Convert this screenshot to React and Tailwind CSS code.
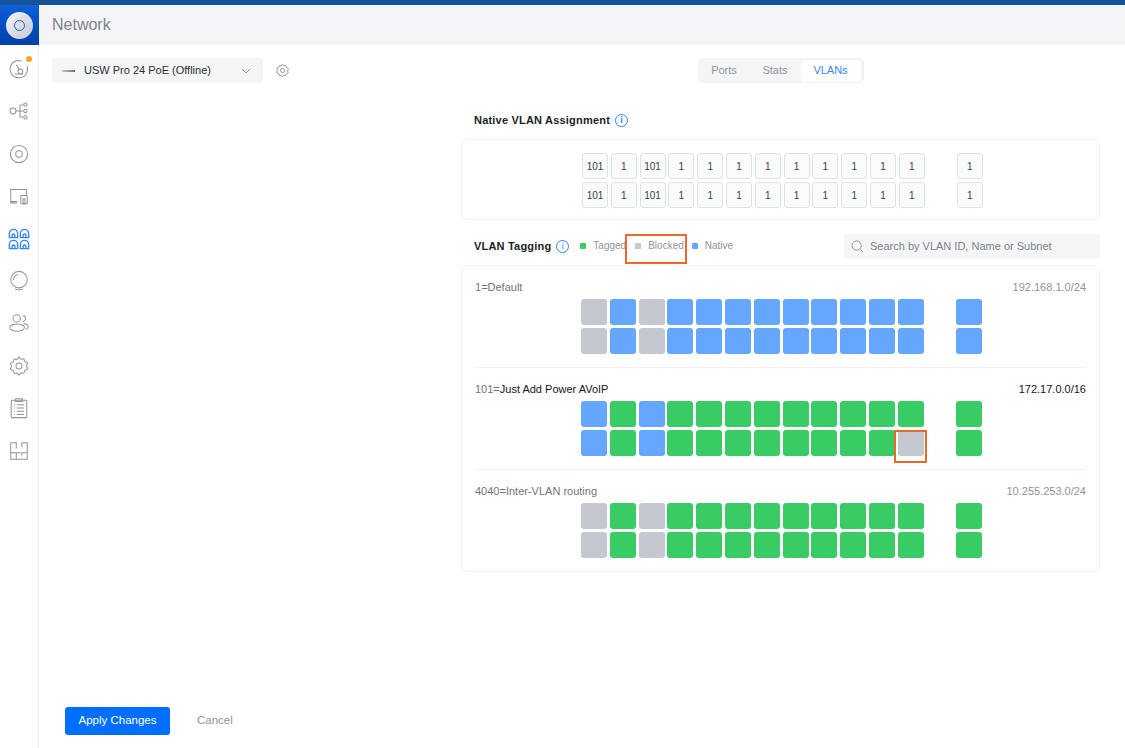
import React from "react";

const FONT = { fontFamily: '"Liberation Sans", Arial, sans-serif' };
const GREEN = "bg-[#39cb64]";
const BLUE = "bg-[#65a6ff]";
const GRAY = "bg-[#c5c8d1]";

function Ico({ children, className = "" }) {
  return (
    <svg viewBox="0 0 24 24" width="22" height="22" fill="none" stroke="#8f949c" strokeWidth="1.1" className={className}>
      {children}
    </svg>
  );
}

function Sidebar() {
  return (
    <aside className="w-[39px] shrink-0 border-r border-[#eeeff1] flex flex-col items-center bg-white">
      <div className="w-[39px] h-[40px] bg-gradient-to-b from-[#0c60d6] to-[#003fa8] flex items-center justify-center">
        <div className="w-[27px] h-[27px] rounded-full bg-gradient-to-br from-[#f4f5f8] to-[#c4c8d6] flex items-center justify-center">
          <div className="w-[11px] h-[11px] rounded-full border-[1.5px] border-[#2a5db0]"></div>
        </div>
      </div>
      <div className="flex flex-col items-center mt-[13px] gap-[20.4px]">
        <div className="relative w-[22px] h-[22px]">
          <Ico>
            <path d="M15 3.2A9.5 9.5 0 1 0 20.8 9" />
            <path d="M9 7.5l3.3 5" />
            <circle cx="13.5" cy="14.5" r="2.6" />
            <path d="M7.5 17.5h9" />
          </Ico>
          <span className="absolute right-[-2px] top-[-2px] w-[6px] h-[6px] rounded-full bg-[#f5a623]"></span>
        </div>
        <Ico>
          <circle cx="5.5" cy="12" r="3.2" />
          <path d="M8.7 12H13M13 5.5v13M13 5.5h4M13 18.5h4M13 12h4" />
          <circle cx="19" cy="5" r="1.8" />
          <circle cx="19" cy="12" r="1.8" />
          <circle cx="19" cy="19" r="1.8" />
        </Ico>
        <Ico>
          <circle cx="12" cy="12" r="9.4" />
          <circle cx="12" cy="12" r="3.6" />
        </Ico>
        <Ico>
          <path d="M10 18H3V5h17v6" />
          <path d="M3 18v1.5h7" />
          <rect x="14" y="11.5" width="7" height="9" rx="1" />
          <rect x="16.5" y="15" width="2" height="5.5" />
        </Ico>
        <svg viewBox="0 0 24 24" width="22" height="22" fill="none" stroke="#2f86ff" strokeWidth="1.5">
          <path d="M1.5 10.5V6a4.5 4.5 0 0 1 9 0v4.5z" />
          <path d="M13.5 10.5V6a4.5 4.5 0 0 1 9 0v4.5z" />
          <path d="M1.5 22.5V18a4.5 4.5 0 0 1 9 0v4.500z" />
          <path d="M13.500 22.500V18a4.500 4.500 0 0 1 9 0v4.500z" />
          <path d="M4.500 10V8a1.500 1.500 0 0 1 3 0v2M16.500 10V8a1.500 1.500 0 0 1 3 0v2M4.500 22v-2a1.500 1.500 0 0 1 3 0v2M16.500 22v-2a1.500 1.500 0 0 1 3 0v2" />
        </svg>
        <Ico>
          <circle cx="12" cy="10.500" r="9" />
          <path d="M6 11a6 6 0 0 1 5-6" />
          <path d="M8 20.500c0 1.500 8 1.500 8 0" />
        </Ico>
        <Ico>
          <circle cx="9.500" cy="7" r="4" />
          <path d="M16 4a3 3 0 0 1 0 6.500" />
          <ellipse cx="10" cy="17" rx="8" ry="4" />
          <path d="M17 12.500c3 .5 5 2 5 3.500s-1 2-2.500 2.500" />
        </Ico>
        <Ico>
          <path d="M12 2l2 2.600 3.300-.5 1 3.200 3 1.400-1 3.300 1 3.300-3 1.400-1 3.200-3.300-.5L12 22l-2-2.400-3.300.5-1-3.200-3-1.400 1-3.300-1-3.300 3-1.400 1-3.200 3.300.5z" />
          <circle cx="12" cy="12" r="3.300" />
        </Ico>
        <Ico>
          <rect x="3.500" y="3.500" width="17" height="19" rx="1" />
          <rect x="8" y="1.800" width="8" height="3.200" rx="0.500" />
          <path d="M6.500 8.500h1M9.500 8.500h8M6.500 12h1M9.500 12h8M6.500 15.500h1M9.500 15.500h8M6.500 19h1M9.500 19h8" />
        </Ico>
        <Ico>
          <path d="M3 3h6v6M15 3h6v18H3V3M15 3v5M3 14h6M9 14v7M9 14h5M15 14h6M15 14v3" />
        </Ico>
      </div>
    </aside>
  );
}

function Port({ bg, children }) {
  return (
    <div className={`w-[26px] h-[26px] rounded-[3px] flex items-center justify-center text-[10px] text-[#3c4148] ${bg}`}>
      {children}
    </div>
  );
}

function PortGrid({ rows, mk }) {
  return (
    <div className="flex flex-col gap-[3px] pl-[120px]">
      {rows.map((row, i) => (
        <div key={i} className="flex">
          <div className="flex gap-[2.8px]">
            {row.slice(0, 12).map((c, j) => (
              <React.Fragment key={j}>{mk(c)}</React.Fragment>
            ))}
          </div>
          <div className="ml-[32px]">{mk(row[12])}</div>
        </div>
      ))}
    </div>
  );
}

const nativeRow = ["101", "1", "101", "1", "1", "1", "1", "1", "1", "1", "1", "1", "1"];
const mkNative = (c) => (
  <div className="w-[26px] h-[26px] rounded-[3px] border border-[#dfe1e5] bg-[#fafbfb] flex items-center justify-center text-[10px] text-[#3c4148]">
    {c}
  </div>
);
const mkColor = (c) => <Port bg={c === "g" ? GREEN : c === "b" ? BLUE : GRAY} />;

const row = (s) => s.split("");

function VlanRow({ label, sub, rows, dark, last }) {
  return (
    <div className={`mx-[13px] ${last ? "" : "border-b border-[#f0f1f3]"}`}>
      <div className="flex justify-between items-center h-[22px] mt-[10px] text-[11px] text-[#6f747c]">
        <span>
          <span>{label[0]}=</span>
          <span className={dark ? "text-[#14161a]" : ""}>{label[1]}</span>
        </span>
        <span className={dark ? "text-[#14161a]" : "text-[#8f949c]"}>{sub}</span>
      </div>
      <div className={`mt-[1px] ${last ? "mb-[13px]" : "mb-[13px]"} -ml-[14px]`}>
        <PortGrid rows={rows} mk={mkColor} />
      </div>
    </div>
  );
}

function Info() {
  return (
    <span className="w-[13px] h-[13px] rounded-full border border-[#2f86ff] text-[#2f86ff] text-[9px] leading-none flex items-center justify-center ml-[5px]">
      i
    </span>
  );
}

function Legend({ color, children }) {
  return (
    <span className="flex items-center text-[10px] text-[#8f949c]">
      <span className={`w-[6px] h-[6px] rounded-[1px] mr-[7px] ${color}`}></span>
      <span className="-mt-[2px]">{children}</span>
    </span>
  );
}

export default function App() {
  return (
    <div className="w-[1125px] h-[748px] overflow-hidden bg-white flex flex-col relative" style={FONT}>
      <div className="h-[5px] bg-[#15549b] shrink-0"></div>
      <div className="flex flex-1 min-h-0">
        <Sidebar />
        <main className="flex-1 min-w-0 flex flex-col">
          <header className="h-[40px] shrink-0 bg-[#f4f5f6] pl-[13px] flex items-center text-[16px] text-[#7e838b]">
            Network
          </header>
          <div className="flex flex-1 min-h-0">
            <div className="w-[422px] shrink-0 flex flex-col justify-between pl-[13px]">
              <div className="flex items-center mt-[13px]">
                <div className="w-[211px] h-[25px] rounded-[4px] bg-[#f4f5f6] flex items-center pl-[10px] pr-[12px]">
                  <span className="w-[13px] h-[2px] bg-gradient-to-r from-[#c8cacd] to-[#6b6e72]"></span>
                  <span className="ml-[9px] text-[11px] text-[#2b2f36] flex-1">USW Pro 24 PoE (Offline)</span>
                  <svg width="10" height="6" viewBox="0 0 10 6" fill="none" stroke="#9a9ea6" strokeWidth="1">
                    <path d="M1 1l4 4 4-4" />
                  </svg>
                </div>
                <svg viewBox="0 0 24 24" width="15" height="15" fill="none" stroke="#8f949c" strokeWidth="1.500" className="ml-[12px]">
                  <path d="M12 2l2 2.600 3.300-.5 1 3.200 3 1.400-1 3.300 1 3.300-3 1.400-1 3.200-3.300-.5L12 22l-2-2.400-3.300.5-1-3.200-3-1.400 1-3.300-1-3.300 3-1.400 1-3.200 3.300.5z" />
                  <circle cx="12" cy="12" r="3.300" />
                </svg>
              </div>
              <div className="flex items-center mb-[13px] ml-[13px]">
                <button className="w-[105px] h-[28px] rounded-[3px] bg-[#006fff] text-white text-[11.500px]">Apply Changes</button>
                <button className="ml-[27px] text-[11.500px] text-[#8f949c]">Cancel</button>
              </div>
            </div>

            <div className="w-[639px] shrink-0">
              <div className="flex justify-center mt-[13px] pl-[178px] pr-[0px]">
                <div className="w-[166px] h-[25px] rounded-[5px] bg-[#f4f5f6] border border-[#f0f1f3] flex items-center text-[11px] text-[#8f949c] mr-[178px]">
                  <span className="w-[51px] text-center">Ports</span>
                  <span className="w-[51px] text-center">Stats</span>
                  <span className="w-[60px] h-[22px] rounded-[4px] bg-white text-[#2f86ff] flex items-center justify-center">VLANs</span>
                </div>
              </div>

              <div className="flex items-center mt-[29px] ml-[13px] h-[16px] text-[11px] font-bold text-[#1c1f24] tracking-[0.2px]">
                Native VLAN Assignment
                <Info />
              </div>
              <div className="mt-[11px] h-[81px] rounded-[6px] border border-[#f0f1f3] pt-[13px] -mb-[0px]">
                <PortGrid rows={[nativeRow, nativeRow]} mk={mkNative} />
              </div>

              <div className="flex items-center mt-[13px] h-[26px]">
                <span className="ml-[13px] text-[11px] font-bold text-[#1c1f24] tracking-[0.2px]">VLAN Tagging</span>
                <Info />
                <div className="flex ml-[11px] gap-[9px]">
                  <Legend color={GREEN}>Tagged</Legend>
                  <Legend color={GRAY}>Blocked</Legend>
                  <span className="ml-[-1px]">
                    <Legend color={BLUE}>Native</Legend>
                  </span>
                </div>
                <div className="ml-auto w-[256px] h-[25px] rounded-[4px] bg-[#f4f5f6] flex items-center pl-[7px] text-[11px] text-[#7e838b]">
                  <svg viewBox="0 0 14 14" width="13" height="13" fill="none" stroke="#8f949c" strokeWidth="1">
                    <circle cx="6" cy="6" r="5" />
                    <path d="M10 10l3 3" />
                  </svg>
                  <span className="ml-[6px]">Search by VLAN ID, Name or Subnet</span>
                </div>
              </div>

              <div className="mt-[6px] h-[307px] rounded-[6px] border border-[#f0f1f3]">
                <VlanRow
                  label={["1", "Default"]}
                  sub="192.168.1.0/24"
                  rows={[row("ababbbbbbbbbb"), row("ababbbbbbbbbb")].map((r) => r.map((c) => (c === "a" ? "x" : "b")))}
                />
                <VlanRow
                  label={["101", "Just Add Power AVoIP"]}
                  sub="172.17.0.0/16"
                  dark
                  rows={[row("bgbgggggggggg"), row("bgbgggggggggg").map((c, i) => (i === 11 ? "x" : c))]}
                />
                <VlanRow
                  label={["4040", "Inter-VLAN routing"]}
                  sub="10.255.253.0/24"
                  last
                  rows={[row("xgxgggggggggg"), row("xgxgggggggggg")]}
                />
              </div>
            </div>
          </div>
        </main>
      </div>
      <div className="absolute left-[625px] top-[234px] w-[62px] h-[30px] border-2 border-[#e8692a]"></div>
      <div className="absolute left-[894px] top-[430px] w-[33px] h-[33px] border-2 border-[#e8692a]"></div>
    </div>
  );
}
